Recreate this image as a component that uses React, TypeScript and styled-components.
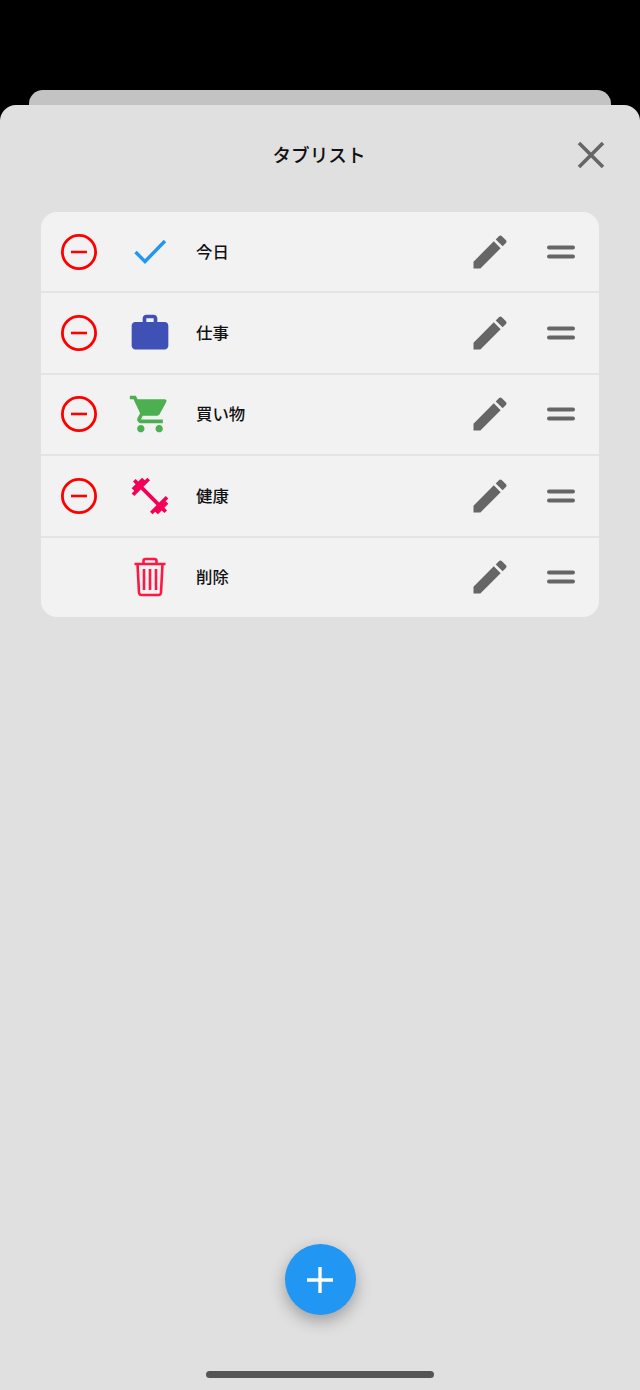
import React from 'react'
import styled, { createGlobalStyle } from 'styled-components'

const GlobalStyle = createGlobalStyle`
  html, body {
    margin: 0;
    padding: 0;
    background: #000;
    font-family: "Noto Sans CJK JP", "Liberation Sans", sans-serif;
  }
`

const Screen = styled.div`
  display: flex;
  flex-direction: column;
  width: 640px;
  height: 1390px;
  padding-top: 90px;
  box-sizing: border-box;
  background: #000;
  overflow: hidden;
`

const BackSheet = styled.div`
  flex: none;
  height: 15px;
  margin: 0 29px;
  background: #c3c3c3;
  border-radius: 14px 14px 0 0;
`

const Sheet = styled.div`
  flex: 1;
  display: flex;
  flex-direction: column;
  background: #e0e0e0;
  border-radius: 16px 16px 0 0;
`

const Header = styled.header`
  display: grid;
  grid-template-columns: 1fr auto 1fr;
  align-items: center;
  height: 100px;
  padding-right: 27px;
  padding-left: 27px;
`

const Title = styled.h1`
  grid-column: 2;
  margin: 0 0 4px;
  font-size: 18.6px;
  font-weight: 500;
  color: #111;
  transform: translateX(-1px);
`

const CloseButton = styled.button`
  grid-column: 3;
  justify-self: end;
  display: flex;
  align-items: center;
  justify-content: center;
  width: 44px;
  height: 44px;
  padding: 0;
  border: 0;
  background: none;
`

const List = styled.ul`
  display: flex;
  flex-direction: column;
  gap: 2px;
  margin: 7px 41px 0;
  padding: 0;
  list-style: none;
  background: #e4e4e4;
  border-radius: 16px;
  overflow: hidden;
`

const Row = styled.li`
  display: grid;
  grid-template-columns: 76px 66px 1fr 67px 76px;
  align-items: center;
  height: 79.4px;
  background: #f2f2f2;
`

const Cell = styled.div`
  display: flex;
  align-items: center;
  justify-content: center;
`

const Label = styled.span`
  padding-left: 13px;
  padding-bottom: 2px;
  font-size: 16.4px;
  font-weight: 500;
  color: #111;
`

const Icon = styled.svg<{ $color: string }>`
  display: block;
  fill: ${p => p.$color};
`

const LineIcon = styled.svg<{ $color: string; $width: number }>`
  display: block;
  fill: none;
  stroke: ${p => p.$color};
  stroke-width: ${p => p.$width};
`

const Footer = styled.div`
  display: flex;
  flex-direction: column;
  align-items: center;
  margin-top: auto;
  padding-bottom: 12px;
`

const Fab = styled.button`
  display: flex;
  align-items: center;
  justify-content: center;
  width: 71px;
  height: 71px;
  padding: 0;
  border: 0;
  border-radius: 50%;
  background: #2196f3;
  box-shadow: 0 6px 16px rgba(0, 0, 0, 0.3);
`

const HomeBar = styled.div`
  width: 228px;
  height: 7px;
  margin-top: 56px;
  border-radius: 4px;
  background: #555;
`

const Check = () => (
  <LineIcon width="44" height="44" viewBox="0 0 44 44" $color="#2196f3" $width={3.4}>
    <path d="M7.5 22 L17 31.5 L37 11" />
  </LineIcon>
)

const Work = () => (
  <Icon width="44" height="44" viewBox="0 0 24 24" $color="#3f51b5">
    <path d="M20 6h-4V4c0-1.11-.89-2-2-2h-4c-1.11 0-2 .89-2 2v2H4c-1.11 0-1.99.89-1.99 2L2 19c0 1.11.89 2 2 2h16c1.11 0 2-.89 2-2V8c0-1.11-.89-2-2-2zm-6 0h-4V4h4v2z" />
  </Icon>
)

const Cart = () => (
  <Icon width="44" height="44" viewBox="0 0 24 24" $color="#4caf50">
    <path d="M7 18c-1.1 0-1.99.9-1.99 2S5.9 22 7 22s2-.9 2-2-.9-2-2-2zM1 2v2h2l3.6 7.59-1.35 2.45c-.16.28-.25.61-.25.96 0 1.1.9 2 2 2h12v-2H7.42c-.14 0-.25-.11-.25-.25l.03-.12.9-1.63h7.45c.75 0 1.41-.41 1.75-1.03l3.58-6.49c.08-.14.12-.31.12-.48 0-.55-.45-1-1-1H5.21l-.94-2H1zm16 16c-1.1 0-1.99.9-1.99 2s.89 2 1.99 2 2-.9 2-2-.9-2-2-2z" />
  </Icon>
)

const Dumbbell = () => (
  <Icon width="44" height="44" viewBox="0 0 24 24" $color="#f50057">
    <path d="M20.57 14.86L22 13.43 20.57 12 17 15.57 8.43 7 12 3.43 10.57 2 9.14 3.43 7.71 2 5.57 4.14 4.14 2.71 2.71 4.14l1.43 1.43L2 7.71l1.43 1.43L2 10.57 3.43 12 7 8.43 15.57 17 12 20.57 13.43 22l1.43-1.43L16.29 22l2.14-2.14 1.43 1.43 1.43-1.43-1.43-1.43L22 16.29z" />
  </Icon>
)

const Trash = () => (
  <LineIcon width="44" height="44" viewBox="0 0 44 44" $color="#ff1744" $width={2.6}>
    <path d="M6.5 9 H37.5" />
    <path d="M15.5 9 V6 Q15.5 4 17.5 4 H26.5 Q28.5 4 28.5 6 V9" />
    <path d="M9.5 9 L11 37.5 Q11.2 40 13.5 40 H30.5 Q32.8 40 33 37.5 L34.5 9" />
    <path d="M16 14 V35 M22 14 V35 M28 14 V35" />
  </LineIcon>
)

const MinusCircle = () => (
  <LineIcon width="44" height="44" viewBox="0 0 44 44" $color="#ff0000" $width={2.8}>
    <circle cx="22" cy="22" r="16.6" />
    <path d="M14 22 H30" strokeWidth="2.6" />
  </LineIcon>
)

const Pencil = () => (
  <Icon width="44" height="44" viewBox="0 0 24 24" $color="#666">
    <path d="M3 17.25V21h3.75L17.81 9.94l-3.75-3.75L3 17.25zM20.71 7.04c.39-.39.39-1.02 0-1.41l-2.34-2.34c-.39-.39-1.02-.39-1.41 0l-1.83 1.83 3.75 3.75 1.83-1.83z" />
  </Icon>
)

const Handle = () => (
  <LineIcon width="44" height="44" viewBox="0 0 44 44" $color="#666" $width={4}>
    <path d="M10 17.5 H34 M10 26.5 H34" strokeLinecap="round" />
  </LineIcon>
)

const tabs = [
  { name: '今日', icon: <Check />, removable: true },
  { name: '仕事', icon: <Work />, removable: true },
  { name: '買い物', icon: <Cart />, removable: true },
  { name: '健康', icon: <Dumbbell />, removable: true },
  { name: '削除', icon: <Trash />, removable: false },
]

export default function App() {
  return (
    <Screen>
      <GlobalStyle />
      <BackSheet />
      <Sheet>
        <Header>
          <Title>タブリスト</Title>
          <CloseButton aria-label="閉じる">
            <LineIcon width="44" height="44" viewBox="0 0 44 44" $color="#666" $width={3.6}>
              <path d="M10 10 L34 34 M34 10 L10 34" />
            </LineIcon>
          </CloseButton>
        </Header>
        <List>
          {tabs.map(tab => (
            <Row key={tab.name}>
              <Cell>{tab.removable && <MinusCircle />}</Cell>
              <Cell>{tab.icon}</Cell>
              <Label>{tab.name}</Label>
              <Cell><Pencil /></Cell>
              <Cell><Handle /></Cell>
            </Row>
          ))}
        </List>
        <Footer>
          <Fab aria-label="追加">
            <LineIcon width="44" height="44" viewBox="0 0 44 44" $color="#fff" $width={3.4}>
              <path d="M22 9 V35 M9 22 H35" />
            </LineIcon>
          </Fab>
          <HomeBar />
        </Footer>
      </Sheet>
    </Screen>
  )
}
